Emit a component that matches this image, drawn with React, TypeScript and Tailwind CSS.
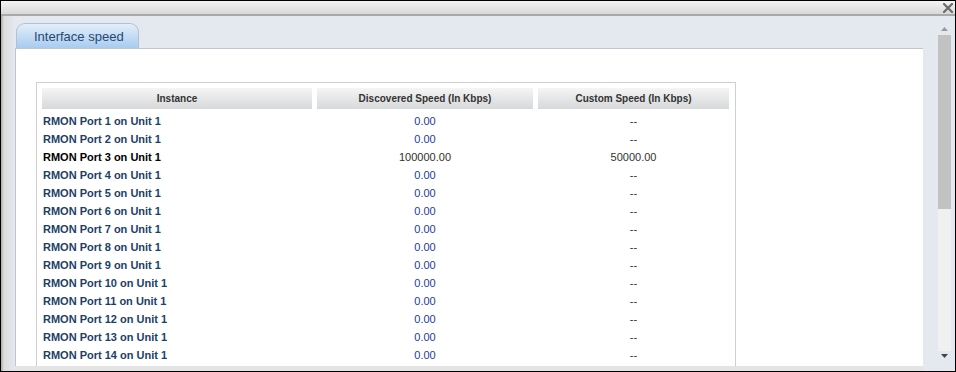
import React from "react";

type Row = { name: string; discovered: string; custom: string; active?: boolean };

const rows: Row[] = Array.from({ length: 14 }, (_, i) => ({
  name: `RMON Port ${i + 1} on Unit 1`,
  discovered: i === 2 ? "100000.00" : "0.00",
  custom: i === 2 ? "50000.00" : "--",
  active: i === 2,
}));

function CloseIcon() {
  return (
    <svg width="10" height="10" viewBox="0 0 10 10">
      <path d="M1 1L9 9M9 1L1 9" stroke="#6b6b6b" strokeWidth={2.2} strokeLinecap="square" />
    </svg>
  );
}

function Arrow({ down }: { down?: boolean }) {
  return (
    <svg width="7" height="4" viewBox="0 0 7 4">
      <path d={down ? "M0 0H7L3.5 4Z" : "M0 4H7L3.5 0Z"} fill={down ? "#444" : "#9a9a9a"} />
    </svg>
  );
}

export default function App() {
  return (
    <div
      className="w-[956px] h-[372px] border border-black bg-[#e4e9f0] flex flex-col overflow-hidden"
      style={{ fontFamily: '"Liberation Sans", Arial, sans-serif' }}
    >
      {/* title bar */}
      <div className="h-[15px] shrink-0 flex items-center justify-end pr-[2px] bg-gradient-to-b from-[#f4f4f4] to-[#d9d9d9] border-b-2 border-[#a9a9a9]">
        <CloseIcon />
      </div>

      <div className="flex flex-1 min-h-0">
        {/* left gutter */}
        <div className="w-[14px] shrink-0 bg-gradient-to-r from-[#a9a9a9] via-[#dcdcdc] to-[#e4e9f0] via-[20%]" />

        <div className="w-[908px] shrink-0 flex flex-col pt-[7px]">
          <div className="flex">
            <div className="ml-[1px] h-[25px] w-[123px] rounded-t-[9px] border border-b-0 border-[#b4c0cc] bg-gradient-to-b from-[#e3eefa] to-[#a9cbef] pl-[17px] pt-[3px] text-[13px] text-[#244a72]">
              Interface speed
            </div>
          </div>
          <div className="flex-1 bg-white border-t border-l border-[#c2c6ca] pl-[20px] pt-[33px]">
            <div className="w-[700px] h-full border border-b-0 border-[#cfcfcf] px-[5px] pt-[5px]">
              <div className="flex gap-[5px] h-[21px] text-[10px] font-bold text-[#333]">
                <div className="w-[270px] flex items-center justify-center bg-gradient-to-b from-[#f5f5f5] to-[#d6d8da]">
                  Instance
                </div>
                <div className="w-[216px] flex items-center justify-center bg-gradient-to-b from-[#f5f5f5] to-[#d6d8da]">
                  Discovered Speed (In Kbps)
                </div>
                <div className="w-[191px] flex items-center justify-center bg-gradient-to-b from-[#f5f5f5] to-[#d6d8da]">
                  Custom Speed (In Kbps)
                </div>
              </div>
              <div className="pt-[3px]">
                {rows.map((r) => (
                  <div key={r.name} className="flex gap-[5px] h-[18px] items-center text-[11px]">
                    <div
                      className={`w-[270px] pl-[1px] font-bold ${r.active ? "text-black" : "text-[#1d3f66]"}`}
                    >
                      {r.name}
                    </div>
                    <div
                      className={`w-[216px] text-center ${r.active ? "text-[#3a2c22]" : "text-[#23399c]"}`}
                    >
                      {r.discovered}
                    </div>
                    <div className="w-[191px] text-center text-[#333]">{r.custom}</div>
                  </div>
                ))}
              </div>
            </div>
          </div>
          <div className="h-[5px] shrink-0 bg-[#e4e4e4]" />
        </div>

        {/* right side */}
        <div className="w-[14px] shrink-0" />
        <div className="w-[14px] shrink-0 flex flex-col items-center pt-[8px] pb-[10px]">
          <div className="h-[10px] flex items-center">
            <Arrow />
          </div>
          <div className="w-[13px] h-[174px] mt-[1px] bg-[#c2c2c2]" />
          <div className="w-[13px] flex-1 bg-[#f0f0f0]" />
          <div className="h-[10px] flex items-center">
            <Arrow down />
          </div>
        </div>
      </div>
    </div>
  );
}
